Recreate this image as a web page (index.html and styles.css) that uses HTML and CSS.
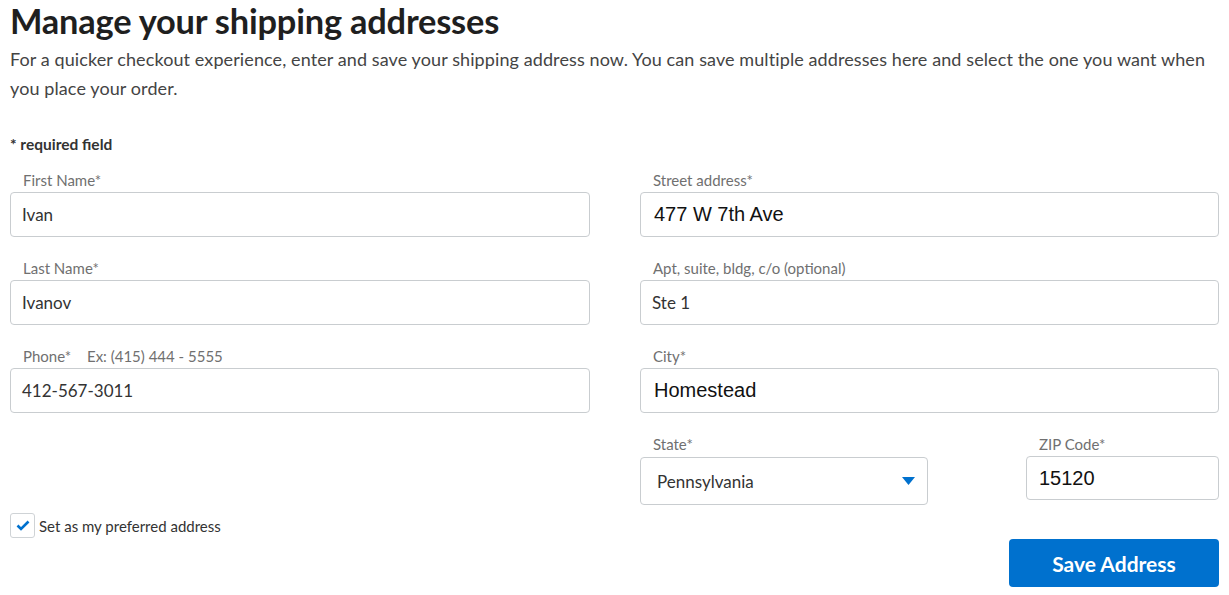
FILE: index.html
```html
<!DOCTYPE html>
<html lang="en">
<head>
  <meta charset="UTF-8" />
  <title>Manage your shipping addresses</title>
  <link rel="stylesheet" href="styles.css">
</head>
<body>
  <div id="page">
    <h1>Manage your shipping addresses</h1>
    <p class="intro">For a quicker checkout experience, enter and save your shipping address now. You can save multiple addresses here and select the one you want when you place your order.</p>
    <p class="required">* required field</p>

    <form class="address-form">
      <div class="col">
        <div class="field">
          <label>First Name*</label>
          <div class="input">Ivan</div>
        </div>
        <div class="field">
          <label>Last Name*</label>
          <div class="input">Ivanov</div>
        </div>
        <div class="field">
          <label>Phone* <span class="hint">Ex: (415) 444 - 5555</span></label>
          <div class="input">412-567-3011</div>
        </div>
      </div>

      <div class="col">
        <div class="field">
          <label>Street address*</label>
          <div class="input arial">477 W 7th Ave</div>
        </div>
        <div class="field">
          <label>Apt, suite, bldg, c/o (optional)</label>
          <div class="input">Ste 1</div>
        </div>
        <div class="field">
          <label>City*</label>
          <div class="input arial">Homestead</div>
        </div>
        <div class="row-split">
          <div class="field state">
            <label>State*</label>
            <div class="input select">
              <span>Pennsylvania</span>
              <svg width="13" height="8" viewBox="0 0 13 8"><path d="M0 0 H13 L6.5 8 Z" fill="#0071ce"/></svg>
            </div>
          </div>
          <div class="field zip">
            <label>ZIP Code*</label>
            <div class="input arial">15120</div>
          </div>
        </div>
      </div>
    </form>

    <div class="form-footer">
      <div class="check">
        <span class="box">
          <svg width="14" height="11" viewBox="0 0 14 11"><path d="M1.5 5.5 L5 9 L12.5 1.5" fill="none" stroke="#0071ce" stroke-width="2.6"/></svg>
        </span>
        <span>Set as my preferred address</span>
      </div>
      <button class="save">Save Address</button>
    </div>
  </div>
</body>
</html>
```

FILE: styles.css
```css
body {
  margin: 0;
  font-family: Lato, "Open Sans", sans-serif;
  color: #333;
  background: #fff;
}

#page {
  padding: 0 10px;
}

h1 {
  margin: 0;
  padding-top: 1px;
  font-size: 34.4px;
  line-height: 40px;
  font-weight: 700;
  color: #1f1f1f;
  letter-spacing: -0.2px;
}

.intro {
  margin: 4px 0 0 0;
  font-size: 18px;
  line-height: 29px;
  letter-spacing: 0.1px;
  color: #444;
}

.required {
  margin: 32px 0 0 0;
  font-size: 15.5px;
  line-height: 18px;
  font-weight: 700;
  color: #333;
}

.address-form {
  display: grid;
  grid-template-columns: 580px 1fr;
  column-gap: 50px;
  margin-top: 18px;
}

.col {
  display: flex;
  flex-direction: column;
  gap: 22px;
}

.field label {
  display: block;
  padding-left: 13px;
  margin-bottom: 3px;
  font-size: 15px;
  line-height: 18px;
  color: #707070;
}

.hint {
  margin-left: 12px;
}

.input {
  box-sizing: border-box;
  height: 45px;
  border: 1px solid #c9cdd0;
  border-radius: 4px;
  padding: 0 11px;
  display: flex;
  align-items: center;
  font-size: 17px;
  color: #333;
}

.input.arial {
  font-family: "Liberation Sans", Arial, sans-serif;
  font-size: 20px;
  padding-left: 13px;
  color: #111;
}

.row-split {
  display: flex;
  justify-content: space-between;
}

.state {
  width: 288px;
}

.state .input {
  height: 48px;
  padding: 0 12px 0 16px;
  justify-content: space-between;
  margin-top: 4px;
}

.zip {
  width: 193px;
}

.zip .input {
  height: 44px;
  padding-left: 12px;
  margin-top: 3px;
}

.form-footer {
  display: flex;
  justify-content: space-between;
  align-items: flex-start;
  margin-top: 8px;
}

.check {
  display: flex;
  align-items: center;
  gap: 4px;
  font-size: 15px;
  color: #333;
}

.box {
  box-sizing: border-box;
  width: 25px;
  height: 25px;
  border: 1px solid #cfd3d6;
  border-radius: 3px;
  display: flex;
  align-items: center;
  justify-content: center;
}

.save {
  margin-top: 26px;
  width: 210px;
  height: 48px;
  border: none;
  border-radius: 4px;
  background: #0071ce;
  color: #fff;
  font-family: Lato, "Open Sans", sans-serif;
  font-size: 21px;
  font-weight: 700;
  cursor: pointer;
}
```
